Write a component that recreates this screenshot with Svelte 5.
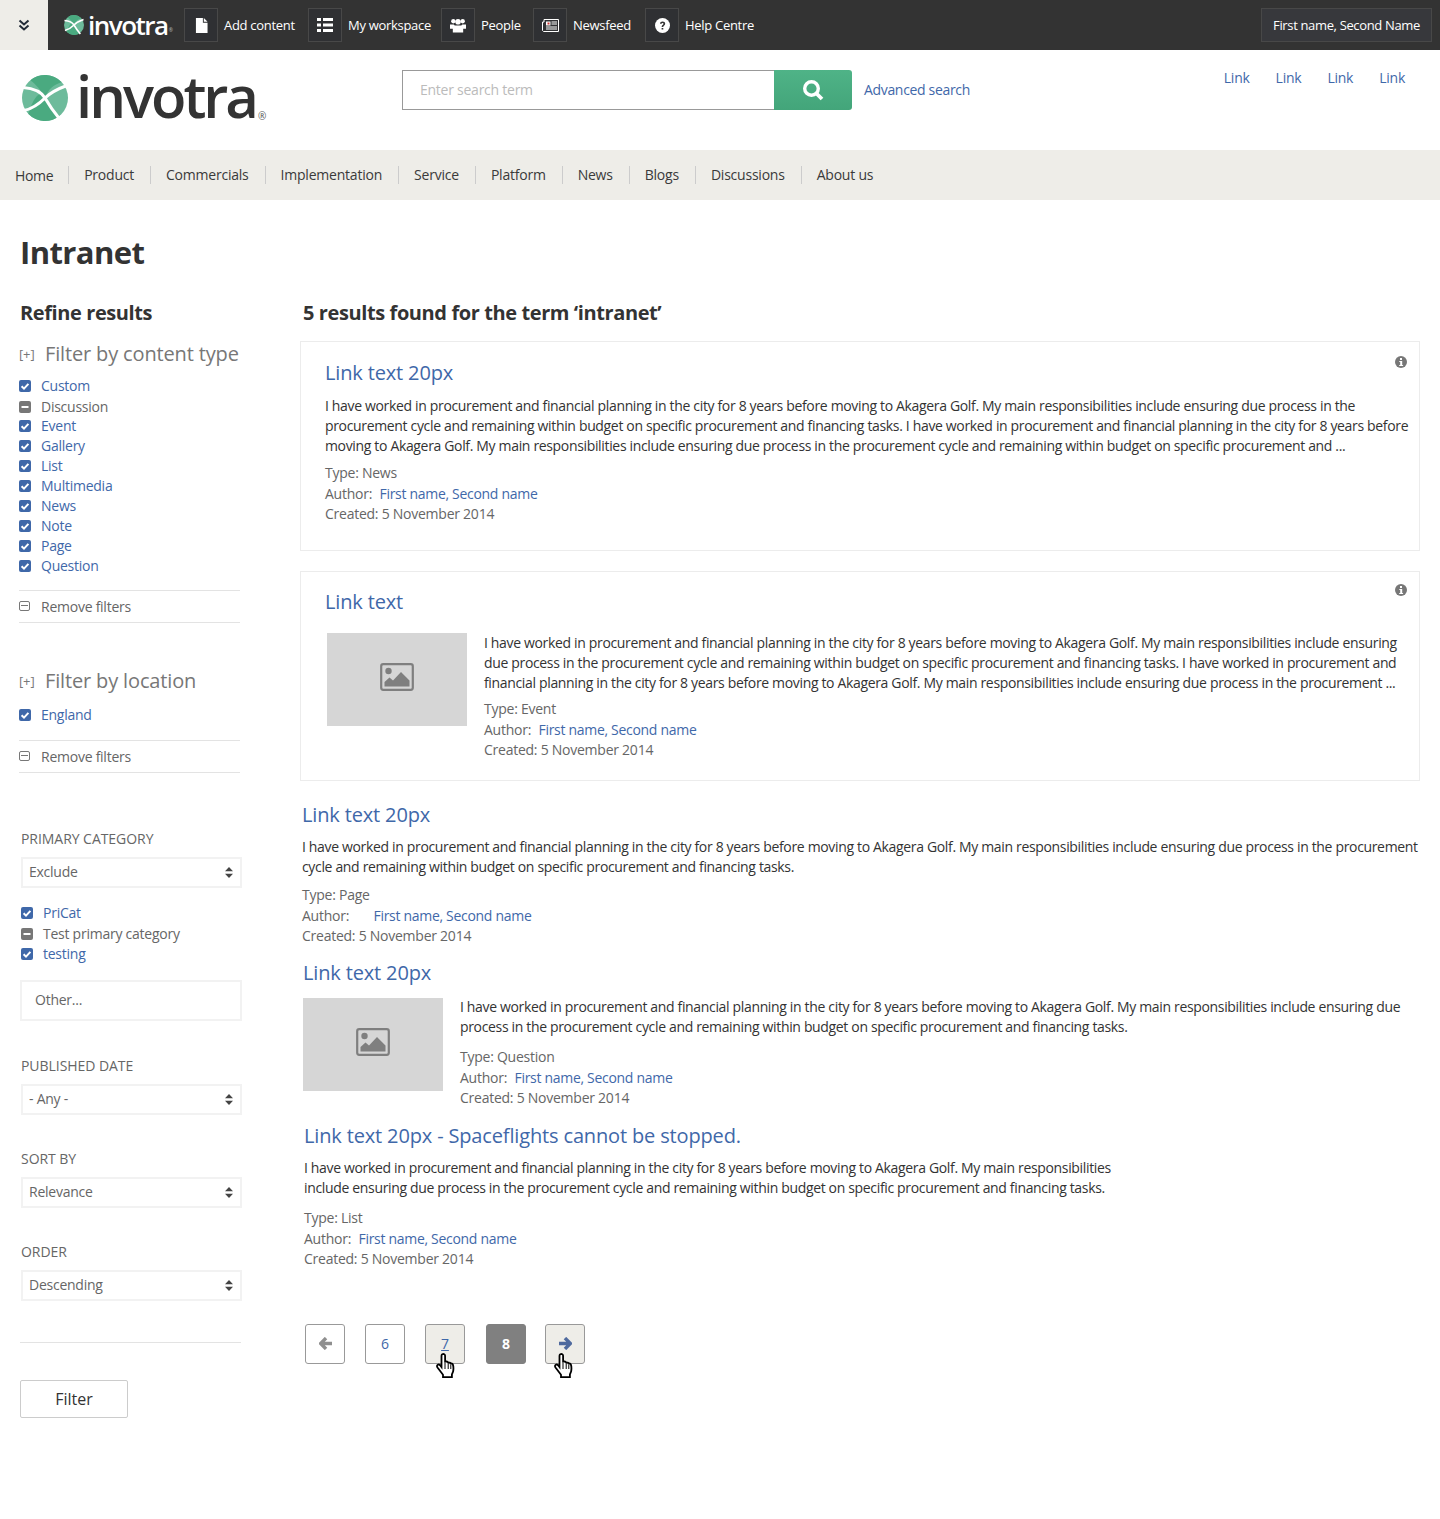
<script lang="ts">
  const topItems = [
    { label: 'Add content', icon: 'file', width: 124 },
    { label: 'My workspace', icon: 'list', width: 133 },
    { label: 'People', icon: 'people', width: 92 },
    { label: 'Newsfeed', icon: 'news', width: 112 },
    { label: 'Help Centre', icon: 'help', width: 112 },
  ];
  const navItems = ['Home', 'Product', 'Commercials', 'Implementation', 'Service', 'Platform', 'News', 'Blogs', 'Discussions', 'About us'];
  const contentTypes = [
    { label: 'Custom', on: true },
    { label: 'Discussion', on: false },
    { label: 'Event', on: true },
    { label: 'Gallery', on: true },
    { label: 'List', on: true },
    { label: 'Multimedia', on: true },
    { label: 'News', on: true },
    { label: 'Note', on: true },
    { label: 'Page', on: true },
    { label: 'Question', on: true },
  ];
  const categories = [
    { label: 'PriCat', on: true },
    { label: 'Test primary category', on: false },
    { label: 'testing', on: true },
  ];
</script>

{#snippet check(on)}
  <span class="box" class:off={!on}>
    <svg viewBox="0 0 12 12" width="12" height="12">
      {#if on}
        <path d="M2.600 6.200 5 8.600 9.400 3.900" fill="none" stroke="#fff" stroke-width="2" />
      {:else}
        <rect x="2.500" y="5" width="7" height="2" fill="#fff" />
      {/if}
    </svg>
  </span>
{/snippet}

{#snippet picture()}
  <svg viewBox="0 0 34 28" width="34" height="28">
    <rect x="1.200" y="1.200" width="31.600" height="25.600" rx="2" fill="none" stroke="#7f7f7f" stroke-width="2.200" />
    <circle cx="8.500" cy="8" r="3.200" fill="#7f7f7f" />
    <path d="M4.500 23.500V19l5-4.500 3.500 3 8-8.500 8.500 8.500v6z" fill="#7f7f7f" />
  </svg>
{/snippet}

{#snippet info()}
  <svg class="info" viewBox="0 0 12 12" width="12" height="12">
    <circle cx="6" cy="6" r="6" fill="#777" />
    <rect x="5" y="2" width="2" height="2" fill="#fff" />
    <path d="M4.300 5h2.900v4h.9v1H4.200V9h1V6h-.9z" fill="#fff" />
  </svg>
{/snippet}

{#snippet caret()}
  <svg class="caret" viewBox="0 0 8 11" width="8" height="11">
    <path d="M4 0 8 4.200H0zM4 11 0 6.800h8z" fill="#444" />
  </svg>
{/snippet}

{#snippet hand()}
  <svg class="hand" viewBox="0 0 20 25" width="20" height="25">
    <path d="M6.500 1.200c1.300-.6 2.600.1 2.600 1.500v6l1-.2c.9-.1 1.700.2 2 1l.2.300c1-.4 2-.1 2.300.8 1-.3 2 .1 2.300 1 .7 2 .6 4.800.2 7l-1.200 2.900v2.700H7v-2.500L1.500 14.500c-.8-1.200-.6-2.300.3-2.800 1-.5 2 0 2.700 1l1 1.300V2.800c0-.7.200-1.300 1-1.600z" fill="#fff" stroke="#000" stroke-width="1.800" />
    <path d="M9 10v6M12.200 11v5M14.800 12v4" stroke="#000" stroke-width="1" fill="none" />
  </svg>
{/snippet}

<div class="topbar">
  <button class="toggle" aria-label="Toggle toolbar">
    <svg viewBox="0 0 12 12" width="12" height="12">
      <path d="M1.500 1.500 6 5.500l4.500-4M1.500 6.500l4.500 4 4.500-4" fill="none" stroke="#222b38" stroke-width="2" />
    </svg>
  </button>
  <div class="top-logo">
    <svg viewBox="-22 -22 44 44" width="20" height="20">
      <circle r="22" fill="#6dbb9b" />
      <path d="M-14-17a22 22 0 0 1 30 2C8-13 3-8 0 0-4-8-9-13-14-17zM14 17a22 22 0 0 1-30-2C-8-9-2-5 0 0 3 7 8 13 14 17z" fill="#4aaa80" />
      <path d="M-21-10C-9-9-3-5 0 0 4 7 9 14 14 20M21-12C10-8 4-4 0 0-5 5-11 10-20 12" fill="none" stroke="#fff" stroke-width="3.500" />
    </svg>
    <span class="top-word">invotra</span><span class="top-reg">®</span>
  </div>
  {#each topItems as item}
    <a class="top-item" href="#top" style:width="{item.width}px">
      <span class="icon-box">
        {#if item.icon === 'file'}
          <svg viewBox="0 0 14 16" width="13" height="15"><path d="M1 0h7.500v5H13.500v11H1z" fill="#fff" /><path d="M9.500 0l4 4h-4z" fill="#fff" /></svg>
        {:else if item.icon === 'list'}
          <svg viewBox="0 0 16 14" width="16" height="14"><path d="M0 0h4v3H0zM6 0h10v3H6zM0 5.500h4v3H0zM6 5.500h10v3H6zM0 11h4v3H0zM6 11h10v3H6z" fill="#fff" /></svg>
        {:else if item.icon === 'people'}
          <svg viewBox="0 0 17 15" width="16" height="15"><circle cx="3.500" cy="3" r="2.300" fill="#fff" /><circle cx="13.500" cy="3" r="2.300" fill="#fff" /><circle cx="8.500" cy="3.500" r="3" fill="#fff" /><path d="M0 6.500h4l1 1h7l1-1h4v4.500h-3v4H3v-4H0z" fill="#fff" /></svg>
        {:else if item.icon === 'news'}
          <svg viewBox="0 0 17 13" width="17" height="13"><path d="M2 .5h14.500v12H1.500L.5 11.500V3H2z" fill="none" stroke="#fff" /><path d="M4 2.500h4.500v4H4z" fill="#fff" /><path d="M9.500 3H15M9.500 5H15M4 8H15M4 10H15" stroke="#fff" /><rect x="5.500" y="3.500" width="2" height="2" fill="#c33" /></svg>
        {:else}
          <svg viewBox="0 0 15 15" width="15" height="15"><circle cx="7.500" cy="7.500" r="7.500" fill="#fff" /><path d="M5 5.800c0-1.500 1.200-2.300 2.600-2.300S10.200 4.300 10.200 5.700c0 1.800-2 1.800-2 3.300H6.600c0-2.200 1.900-2.300 1.900-3.300 0-.5-.4-.8-.9-.8s-1 .3-1 .9zM6.600 9.900h1.700v1.700H6.600z" fill="#333" /></svg>
        {/if}
      </span>
      <span>{item.label}</span>
    </a>
  {/each}
  <button class="user">First name, Second Name</button>
</div>

<header class="header">
  <div class="logo">
    <svg viewBox="-22 -22 44 44" width="46" height="46">
      <circle r="22" fill="#6dbb9b" />
      <path d="M-14-17a22 22 0 0 1 30 2C8-13 3-8 0 0-4-8-9-13-14-17zM14 17a22 22 0 0 1-30-2C-8-9-2-5 0 0 3 7 8 13 14 17z" fill="#4aaa80" />
      <path d="M-21-10C-9-9-3-5 0 0 4 7 9 14 14 20M21-12C10-8 4-4 0 0-5 5-11 10-20 12" fill="none" stroke="#fff" stroke-width="3" />
    </svg>
    <span class="word">invotra</span><span class="reg">®</span>
  </div>
  <form class="search">
    <input type="text" placeholder="Enter search term" />
    <button type="button" aria-label="Search">
      <svg viewBox="0 0 22 22" width="22" height="22">
        <circle cx="9.500" cy="9.500" r="6.800" fill="none" stroke="#fff" stroke-width="3.400" />
        <path d="M14.500 14.500 20 20" stroke="#fff" stroke-width="3.800" />
      </svg>
    </button>
  </form>
  <a class="advanced" href="#top">Advanced search</a>
  <div class="head-links">
    <a href="#top">Link</a><a href="#top">Link</a><a href="#top">Link</a><a href="#top">Link</a>
  </div>
</header>

<nav class="nav">
  {#each navItems as item, i}
    <a class="nav-item" class:first={i === 0} href="#top">{item}</a>
  {/each}
</nav>

<main class="main">
  <h1>Intranet</h1>
  <div class="columns">
    <aside class="side">
      <h2>Refine results</h2>

      <h3 class="filter-title"><span class="plus">[+]</span>Filter by content type</h3>
      <ul class="checks types">
        {#each contentTypes as t, i}
          <li class:gap={i === 0}>{@render check(t.on)}<span class:link={t.on}>{t.label}</span></li>
        {/each}
      </ul>
      <div class="remove"><span class="minus"></span>Remove filters</div>

      <h3 class="filter-title second"><span class="plus">[+]</span>Filter by location</h3>
      <ul class="checks single">
        <li>{@render check(true)}<span class="link">England</span></li>
      </ul>
      <div class="remove lower"><span class="minus"></span>Remove filters</div>

      <div class="field first-field">
        <div class="field-label">PRIMARY CATEGORY</div>
        <div class="select"><select><option>Exclude</option></select>{@render caret()}</div>
      </div>
      <ul class="checks cats">
        {#each categories as c, i}
          <li class:gap={i === 0}>{@render check(c.on)}<span class:link={c.on}>{c.label}</span></li>
        {/each}
      </ul>
      <input class="other" type="text" placeholder="Other..." />

      <div class="field date-field">
        <div class="field-label">PUBLISHED DATE</div>
        <div class="select"><select><option>- Any -</option></select>{@render caret()}</div>
      </div>
      <div class="field">
        <div class="field-label">SORT BY</div>
        <div class="select"><select><option>Relevance</option></select>{@render caret()}</div>
      </div>
      <div class="field">
        <div class="field-label">ORDER</div>
        <div class="select"><select><option>Descending</option></select>{@render caret()}</div>
      </div>

      <div class="side-rule"></div>
      <button class="filter">Filter</button>
    </aside>

    <section class="results">
      <h2 class="found">5 results found for the term ‘intranet’</h2>

      <article class="card one">
        {@render info()}
        <a class="title" href="#top">Link text 20px</a>
        <p class="para">I have worked in procurement and financial planning in the city for 8 years before moving to Akagera Golf. My main responsibilities include ensuring due process in the<br />procurement cycle and remaining within budget on specific procurement and financing tasks. I have worked in procurement and financial planning in the city for 8 years before<br />moving to Akagera Golf. My main responsibilities include ensuring due process in the procurement cycle and remaining within budget on specific procurement and ...</p>
        <div class="meta">
          <div>Type: News</div>
          <div>Author: <a href="#top">First name, Second name</a></div>
          <div>Created: 5 November 2014</div>
        </div>
      </article>

      <article class="card two">
        {@render info()}
        <a class="title" href="#top">Link text</a>
        <div class="media">
          <div class="thumb">{@render picture()}</div>
          <div>
            <p class="para">I have worked in procurement and financial planning in the city for 8 years before moving to Akagera Golf. My main responsibilities include ensuring<br />due process in the procurement cycle and remaining within budget on specific procurement and financing tasks. I have worked in procurement and<br />financial planning in the city for 8 years before moving to Akagera Golf. My main responsibilities include ensuring due process in the procurement ...</p>
            <div class="meta">
              <div>Type: Event</div>
              <div>Author: <a href="#top">First name, Second name</a></div>
              <div>Created: 5 November 2014</div>
            </div>
          </div>
        </div>
      </article>

      <article class="plain three">
        <a class="title" href="#top">Link text 20px</a>
        <p class="para">I have worked in procurement and financial planning in the city for 8 years before moving to Akagera Golf. My main responsibilities include ensuring due process in the procurement<br />cycle and remaining within budget on specific procurement and financing tasks.</p>
        <div class="meta">
          <div>Type: Page</div>
          <div>Author: <a class="wide" href="#top">First name, Second name</a></div>
          <div>Created: 5 November 2014</div>
        </div>
      </article>

      <article class="plain four">
        <a class="title" href="#top">Link text 20px</a>
        <div class="media">
          <div class="thumb">{@render picture()}</div>
          <div>
            <p class="para">I have worked in procurement and financial planning in the city for 8 years before moving to Akagera Golf. My main responsibilities include ensuring due<br />process in the procurement cycle and remaining within budget on specific procurement and financing tasks.</p>
            <div class="meta">
              <div>Type: Question</div>
              <div>Author: <a href="#top">First name, Second name</a></div>
              <div>Created: 5 November 2014</div>
            </div>
          </div>
        </div>
      </article>

      <article class="plain five">
        <a class="title" href="#top">Link text 20px - Spaceflights cannot be stopped.</a>
        <p class="para">I have worked in procurement and financial planning in the city for 8 years before moving to Akagera Golf. My main responsibilities<br />include ensuring due process in the procurement cycle and remaining within budget on specific procurement and financing tasks.</p>
        <div class="meta">
          <div>Type: List</div>
          <div>Author: <a href="#top">First name, Second name</a></div>
          <div>Created: 5 November 2014</div>
        </div>
      </article>

      <div class="pager">
        <a class="page" href="#top" aria-label="Previous">
          <svg viewBox="0 0 12 12" width="13" height="13"><path d="M6.500 1 1.500 6l5 5M2 6H12" fill="none" stroke="#8f8f8f" stroke-width="3.200" /></svg>
        </a>
        <a class="page" href="#top">6</a>
        <a class="page hover under" href="#top">7{@render hand()}</a>
        <span class="page current">8</span>
        <a class="page hover next" href="#top" aria-label="Next">
          <svg viewBox="0 0 12 12" width="13" height="13"><path d="M5.500 1l5 5-5 5M10 6H0" fill="none" stroke="#4f6a9e" stroke-width="3.200" /></svg>
          {@render hand()}
        </a>
      </div>
    </section>
  </div>
</main>

<style>
  :global(body) {
    margin: 0;
    background: #fff;
    font-family: 'Open Sans', 'Noto Sans', sans-serif;
    font-size: 14px;
    letter-spacing: -0.25px;
    color: #333;
  }

  a {
    color: #3f68a9;
    text-decoration: none;
  }

  .topbar {
    display: flex;
    align-items: center;
    height: 50px;
    background: #333;
    color: #fff;
  }

  .toggle {
    display: flex;
    align-items: center;
    justify-content: center;
    width: 48px;
    height: 50px;
    padding: 0;
    border: 0;
    background: #eeede8;
  }

  .top-logo {
    display: flex;
    align-items: center;
    margin-left: 16px;
    width: 120px;
  }

  .top-word {
    margin-left: 4px;
    font-size: 26px;
    line-height: 30px;
    font-weight: 600;
    letter-spacing: -1.500px;
    color: #fff;
  }

  .top-reg {
    align-self: flex-end;
    margin: 0 0 7px 1px;
    font-size: 5px;
    color: #bbb;
  }

  .top-item {
    display: flex;
    flex: none;
    align-items: center;
    gap: 6px;
    color: #fff;
    font-size: 13px;
    letter-spacing: -0.3px;
  }

  .icon-box {
    display: flex;
    align-items: center;
    justify-content: center;
    width: 32px;
    height: 32px;
    border: 1px solid #484848;
    background: #2f3033;
  }

  .user {
    margin-left: auto;
    margin-right: 8px;
    width: 171px;
    height: 34px;
    padding: 0;
    border: 1px solid #484848;
    background: #37383c;
    color: #fff;
    font: inherit;
    font-size: 13px;
    letter-spacing: -0.35px;
  }

  .header {
    display: flex;
    align-items: flex-start;
    height: 100px;
  }

  .logo {
    display: flex;
    align-items: center;
    box-sizing: border-box;
    width: 402px;
    height: 95px;
    padding-left: 22px;
  }

  .word {
    margin: -4px 0 0 8px;
    font-size: 58px;
    line-height: 60px;
    font-weight: 600;
    letter-spacing: -3px;
    color: #333;
  }

  .reg {
    align-self: flex-end;
    margin: 0 0 22px 2px;
    font-size: 10px;
    color: #555;
  }

  .search {
    display: flex;
    margin: 20px 0 0 0;
    width: 450px;
    height: 40px;
  }

  .search input {
    flex: 1;
    min-width: 0;
    box-sizing: border-box;
    height: 40px;
    padding: 0 17px 2px;
    border: 1px solid #999;
    border-right: 0;
    font: inherit;
    letter-spacing: -0.25px;
    outline: none;
  }

  .search input::placeholder {
    color: #bbb;
    opacity: 1;
  }

  .search button {
    display: flex;
    align-items: center;
    justify-content: center;
    width: 78px;
    height: 40px;
    padding: 0;
    border: 0;
    border-radius: 0 3px 3px 0;
    background: linear-gradient(#4fb387, #43a57a);
  }

  .advanced {
    margin: 30px 0 0 12px;
    line-height: 19px;
    letter-spacing: -0.33px;
  }

  .head-links {
    display: flex;
    gap: 26px;
    margin: 18px 35px 0 auto;
    line-height: 19px;
  }

  .nav {
    display: flex;
    align-items: center;
    height: 50px;
    padding-left: 15px;
    background: #eeede8;
  }

  .nav-item {
    padding: 0 16px 0 15px;
    border-left: 1px solid #ccc;
    line-height: 18px;
    letter-spacing: -0.22px;
    color: #3a3a3a;
  }

  .nav-item.first {
    padding: 0 15px 0 0;
    border-left: 0;
    position: relative;
    top: 1px;
    letter-spacing: -0.36px;
  }

  .main {
    padding: 0 20px 101px;
  }

  h1 {
    margin: 0;
    padding-top: 32px;
    font-size: 31px;
    line-height: 40px;
    font-weight: 700;
    letter-spacing: -0.6px;
    color: #333;
  }

  .columns {
    display: grid;
    grid-template-columns: 280px minmax(0, 1fr);
    margin-top: 28px;
  }

  .side h2,
  .found {
    margin: 0;
    font-size: 20px;
    line-height: 26px;
    font-weight: 700;
    letter-spacing: -0.4px;
    color: #333;
  }

  .filter-title {
    display: flex;
    align-items: center;
    margin: 15px 0 0 -1px;
    width: 230px;
    font-size: 20px;
    line-height: 26px;
    font-weight: 400;
    letter-spacing: -0.15px;
    white-space: nowrap;
    color: #777;
  }

  .filter-title.second {
    margin-top: 45px;
  }

  .plus {
    width: 26px;
    font-size: 13px;
    color: #777;
  }

  .checks {
    margin: 9px 0 0 -1px;
    padding: 0;
    list-style: none;
    color: #666;
  }

  .checks.single {
    margin-top: 11px;
  }

  .checks li {
    display: flex;
    align-items: center;
    gap: 10px;
    line-height: 20px;
  }

  .checks .gap {
    margin-bottom: 1px;
  }

  .types li:nth-child(2) {
    margin-bottom: -1px;
  }

  .link {
    color: #3f68a9;
  }

  .box {
    display: flex;
    width: 12px;
    height: 12px;
    border-radius: 2px;
    background: #3f68a9;
  }

  .box.off {
    background: #777;
  }

  .remove {
    display: flex;
    align-items: center;
    gap: 11px;
    box-sizing: border-box;
    width: 221px;
    margin: 14px 0 0 -1px;
    height: 33px;
    padding-bottom: 1px;
    border-top: 1px solid #e3e3e3;
    border-bottom: 1px solid #e3e3e3;
    color: #666;
  }

  .remove.lower {
    margin-top: 15px;
  }

  .minus {
    position: relative;
    box-sizing: border-box;
    width: 11px;
    height: 10px;
    border: 1px solid #777;
    border-radius: 2px;
  }

  .minus::after {
    content: '';
    position: absolute;
    left: 1px;
    right: 1px;
    top: 3px;
    height: 1px;
    background: #777;
  }

  .field {
    margin: 35px 0 0 1px;
    width: 221px;
  }

  .first-field {
    margin-top: 57px;
  }

  .date-field {
    margin-top: 36px;
  }

  .field-label {
    margin-bottom: 9px;
    line-height: 18px;
    letter-spacing: -0.05px;
    color: #666;
  }

  .select {
    position: relative;
    height: 31px;
  }

  .select select {
    appearance: none;
    width: 100%;
    height: 31px;
    padding: 0 6px 2px;
    border: 2px solid #f2f2f2;
    border-radius: 0;
    background: #fff;
    color: #666;
    font: inherit;
    letter-spacing: -0.25px;
  }

  .caret {
    position: absolute;
    right: 9px;
    top: 10px;
  }

  .cats {
    margin: 15px 0 0 1px;
  }

  .other {
    display: block;
    box-sizing: border-box;
    width: 222px;
    height: 41px;
    margin-top: 16px;
    padding: 0 13px 2px;
    border: 2px solid #f2f2f2;
    font: inherit;
    letter-spacing: -0.25px;
    outline: none;
  }

  .other::placeholder {
    color: #666;
    opacity: 1;
  }

  .side-rule {
    width: 221px;
    margin-top: 41px;
    border-top: 1px solid #e3e3e3;
  }

  .filter {
    display: block;
    width: 108px;
    height: 38px;
    margin-top: 37px;
    padding: 0;
    border: 1px solid #ccc;
    border-radius: 2px;
    background: #fff;
    color: #333;
    font: inherit;
    font-size: 16px;
  }

  .found {
    margin-left: 3px;
  }

  .card {
    position: relative;
    box-sizing: border-box;
    height: 210px;
    padding: 18px 24px 0;
    border: 1px solid #ececec;
  }

  .one {
    margin-top: 15px;
  }

  .two {
    margin-top: 20px;
    padding-top: 17px;
  }

  .info {
    position: absolute;
    right: 12px;
    top: 14px;
  }

  .two .info {
    top: 12px;
  }

  .title {
    display: block;
    font-size: 20px;
    line-height: 26px;
    letter-spacing: -0.15px;
  }

  .para {
    margin: 10px 0 0;
    line-height: 20px;
    letter-spacing: -0.34px;
    white-space: nowrap;
    color: #333;
  }

  .meta {
    margin-top: 7px;
    color: #666;
    line-height: 20px;
  }

  .meta div:nth-child(2) {
    margin: 1px 0 0;
  }

  .meta a {
    margin-left: 4px;
    letter-spacing: -0.3px;
  }

  .meta a.wide {
    margin-left: 21px;
  }

  .media {
    display: flex;
    gap: 17px;
    margin-top: 18px;
    padding-left: 2px;
  }

  .thumb {
    display: flex;
    flex: none;
    align-items: center;
    justify-content: center;
    box-sizing: border-box;
    width: 140px;
    height: 93px;
    padding-bottom: 6px;
    background: #d6d6d6;
  }

  .media .para {
    margin-top: 0;
  }

  .media .meta {
    margin-top: 6px;
  }

  .plain {
    margin-top: 21px;
  }

  .three {
    margin-left: 2px;
  }

  .three .para,
  .five .para {
    margin-top: 9px;
  }

  .three .meta {
    margin-top: 8px;
  }

  .four {
    margin: 14px 0 0 3px;
  }

  .four .media {
    margin-top: 12px;
    padding-left: 0;
  }

  .four .para {
    margin-top: -1px;
  }

  .four .meta {
    margin-top: 10px;
  }

  .five {
    margin: 15px 0 0 4px;
  }

  .five .meta {
    margin-top: 10px;
  }

  .pager {
    display: flex;
    gap: 20px;
    margin: 55px 0 0 5px;
  }

  .page {
    position: relative;
    display: flex;
    align-items: center;
    justify-content: center;
    box-sizing: border-box;
    width: 40px;
    height: 40px;
    padding-bottom: 1px;
    border: 1px solid #999;
    border-radius: 3px;
    font-size: 14px;
  }

  .page.hover {
    background: #eeede8;
  }

  .page.under {
    text-decoration: underline;
  }

  .page.current {
    margin-left: 1px;
    margin-right: -1px;
    border-color: #808080;
    background: #808080;
    color: #fff;
    font-weight: 700;
  }

  .hand {
    position: absolute;
    left: 10px;
    top: 28px;
  }

  .next .hand {
    left: 8px;
  }
</style>
